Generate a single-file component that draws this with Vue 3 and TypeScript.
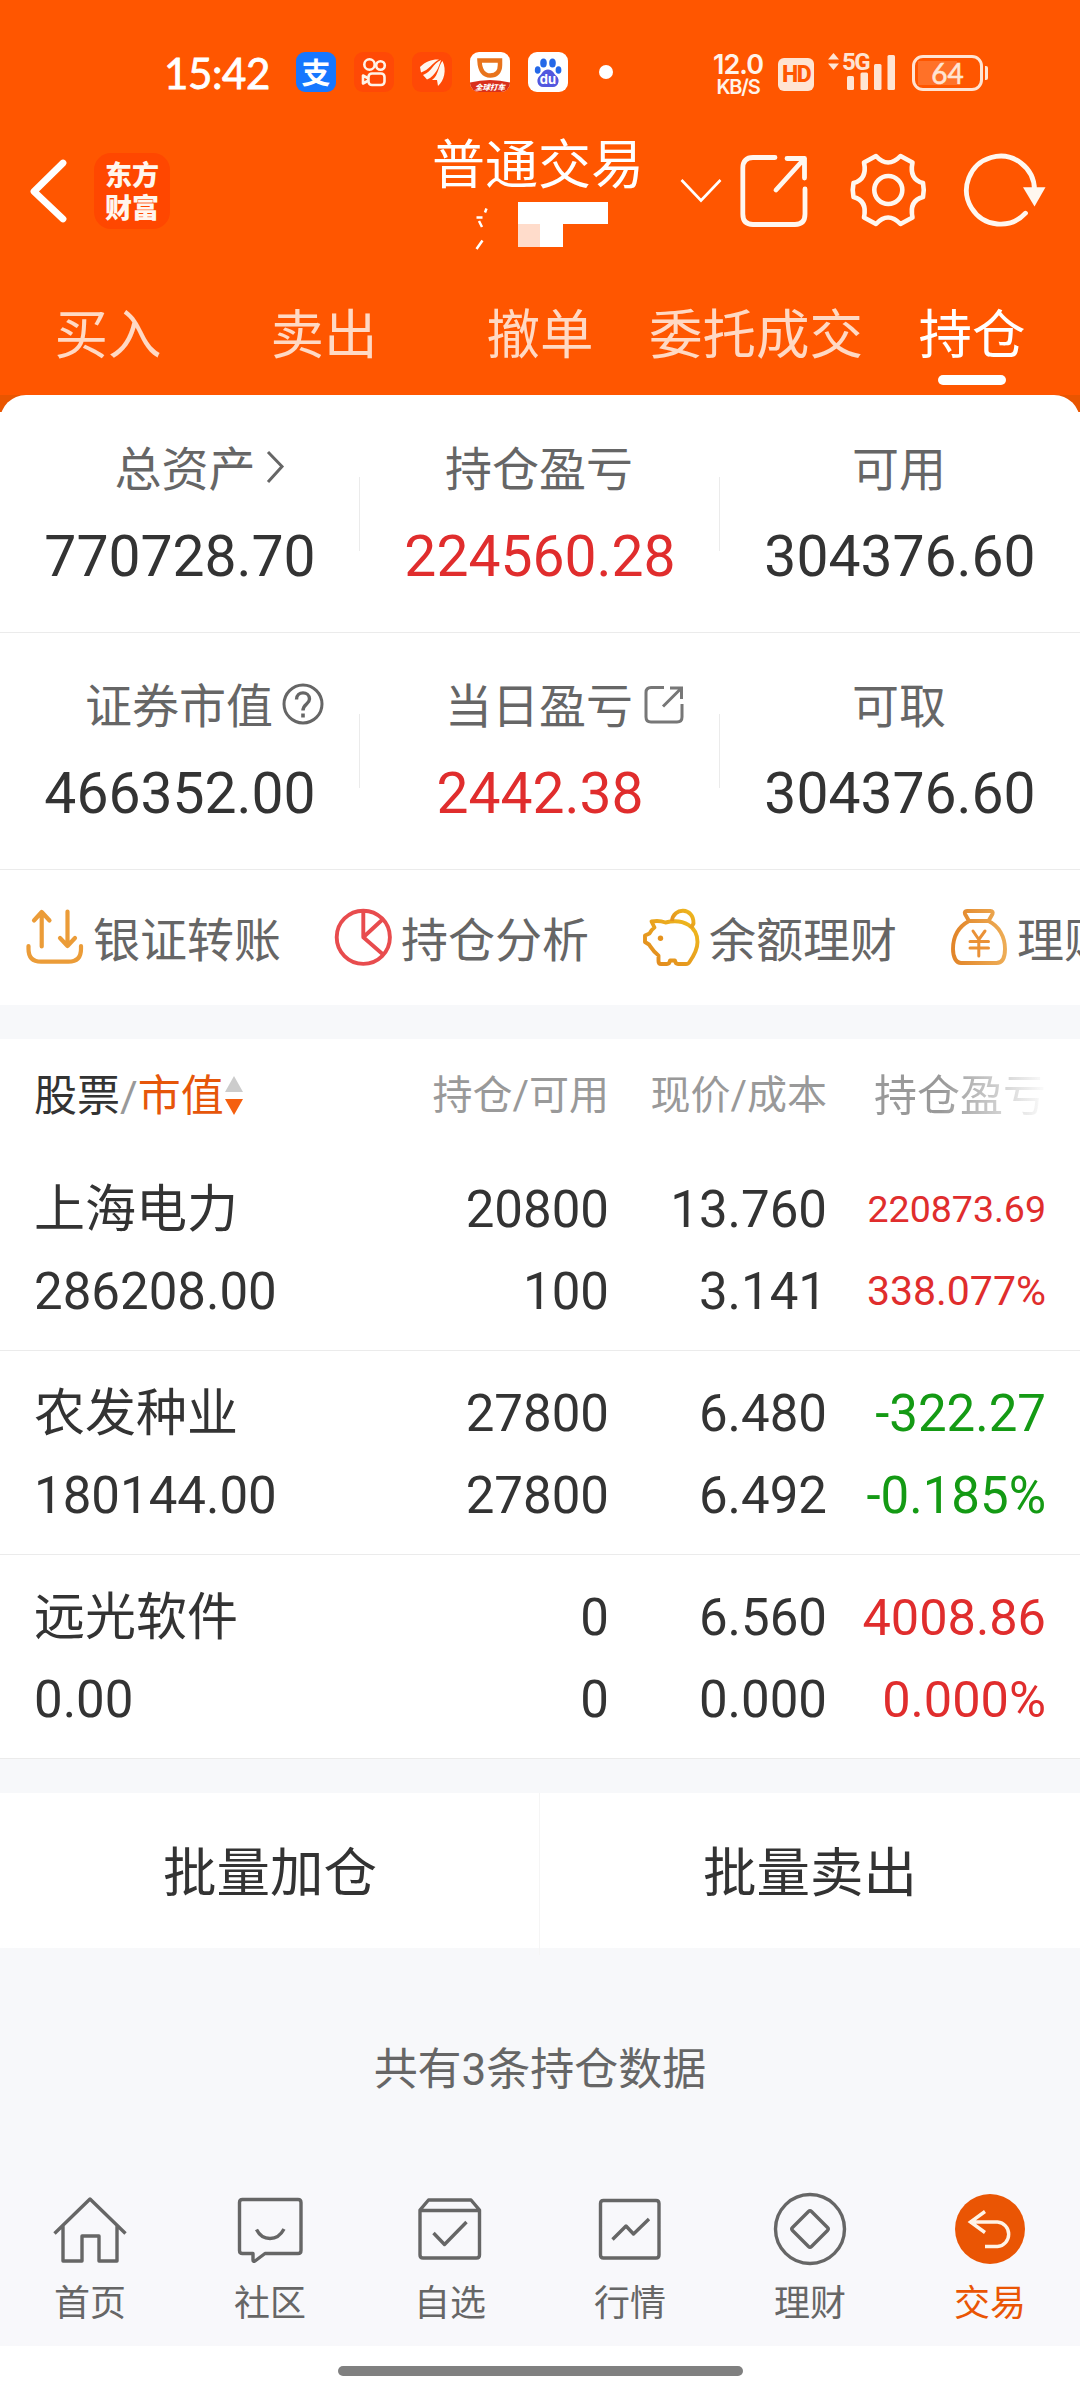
<script setup lang="ts">
interface Holding {
  name: string
  value: string
  qty: string
  avail: string
  price: string
  cost: string
  profit: string
  rate: string
  tone: 'up' | 'down'
  compact?: boolean
}

const tabs: string[] = ['买入', '卖出', '撤单', '委托成交', '持仓']
const activeTab = '持仓'

const summary = [
  [
    { label: '总资产', value: '770728.70', icon: 'more', red: false },
    { label: '持仓盈亏', value: '224560.28', icon: '', red: true },
    { label: '可用', value: '304376.60', icon: '', red: false },
  ],
  [
    { label: '证券市值', value: '466352.00', icon: 'help', red: false },
    { label: '当日盈亏', value: '2442.38', icon: 'open', red: true },
    { label: '可取', value: '304376.60', icon: '', red: false },
  ],
]

const shortcuts = [
  { icon: 'transfer', label: '银证转账' },
  { icon: 'pie', label: '持仓分析' },
  { icon: 'pig', label: '余额理财' },
  { icon: 'bag', label: '理财' },
]

const holdings: Holding[] = [
  { name: '上海电力', value: '286208.00', qty: '20800', avail: '100', price: '13.760', cost: '3.141', profit: '220873.69', rate: '338.077%', tone: 'up', compact: true },
  { name: '农发种业', value: '180144.00', qty: '27800', avail: '27800', price: '6.480', cost: '6.492', profit: '-322.27', rate: '-0.185%', tone: 'down' },
  { name: '远光软件', value: '0.00', qty: '0', avail: '0', price: '6.560', cost: '0.000', profit: '4008.86', rate: '0.000%', tone: 'up' },
]

const nav = [
  { icon: 'home', label: '首页' },
  { icon: 'chat', label: '社区' },
  { icon: 'box', label: '自选' },
  { icon: 'chart', label: '行情' },
  { icon: 'finance', label: '理财' },
  { icon: 'trade', label: '交易' },
]
</script>

<template>
  <div class="screen">
    <header class="top">
      <div class="status">
        <span class="clock">15:42</span>
        <div class="apps">
          <span class="app alipay">支</span>
          <svg class="app kuai" viewBox="0 0 40 40" fill="none" stroke="#fff3e8" stroke-width="2.6">
            <circle cx="15.500" cy="12.500" r="5.200" /><circle cx="26.500" cy="13.500" r="4.300" />
            <rect x="14.500" y="21.500" width="16" height="11.500" rx="3.500" />
            <path d="M14.500 26.500 9 23.500v8l5.500-3" stroke-linejoin="round" />
          </svg>
          <svg class="app east" viewBox="0 0 40 40" fill="#fff6ee">
            <path d="M8 15C14 9 21 7 27 7.500 20 11 17 18 9 20.500Z" />
            <path d="M11 23C20 20 21 11 29 8 27 14 24 24 15 27.500Z" />
            <path d="M20 28C27 23 26 14 30.500 9 35 18 32 29 26 34L25 28Z" />
          </svg>
          <div class="app didi">
            <svg viewBox="0 0 40 40">
              <path d="M9.500 8.500h20.500v4.500c0 7-4 10.500-9.700 10.500S10 20 9.500 8.500Z" fill="none" stroke="#e8731c" stroke-width="4.500" />
              <path d="M0 30.500q20-5 40 0V40H0Z" fill="#d9301c" />
            </svg>
            <span>全球打车</span>
          </div>
          <div class="app baidu">
            <svg viewBox="0 0 40 40">
              <g fill="#2468e8"><ellipse cx="15.500" cy="11" rx="3.300" ry="4.600" /><ellipse cx="24.500" cy="11" rx="3.300" ry="4.600" /><ellipse cx="9.700" cy="18" rx="2.900" ry="3.800" /><ellipse cx="30.500" cy="18" rx="2.900" ry="3.800" /></g>
              <path d="M20 17.500c5 0 5.500 4 8.500 6.500 4 3.500 2 11-3.500 11H15c-5.500 0-7.500-7.500-3.500-11C14.500 21.500 15 17.500 20 17.500Z" fill="#5257df" />
            </svg>
            <span>du</span>
          </div>
        </div>
        <i class="dot"></i>
        <div class="speed"><b>12.0</b><em>KB/S</em></div>
        <span class="hd">HD</span>
        <div class="signal">
          <svg viewBox="0 0 70 40" fill="#ffe4d3">
            <path d="M1 8.500 6.500 2 12 8.500ZM1 12.500 6.500 19 12 12.500Z" />
            <rect x="20" y="25" width="7" height="14" rx="1.500" /><rect x="33.500" y="21.500" width="7.500" height="17.500" rx="1.500" />
            <rect x="47" y="13" width="7.500" height="26" rx="1.500" /><rect x="60.500" y="4" width="7.500" height="35" rx="1.500" />
          </svg>
          <span>5G</span>
        </div>
        <div class="battery"><span>64</span></div>
      </div>

      <div class="titlebar">
        <svg class="back" viewBox="0 0 44 70" fill="none" stroke="#fff" stroke-width="6.800" stroke-linecap="round" stroke-linejoin="round"><path d="M38 7 9 35.500 38 63" /></svg>
        <div class="logo"><span>东方</span><span>财富</span></div>
        <div class="title">
          <h1>普通交易</h1>
          <svg viewBox="0 0 208 50">
            <path d="M53.500 8.500l-1.500 4M43.500 17.500h6M46 21l3 6M49.500 40.500l-6 8.500" fill="none" stroke="#fff" stroke-width="2.500" />
            <path d="M85 2h90v22h-45v23h-23V24H85Z" fill="#fff" /><path d="M85 24h22v23H85Z" fill="#ffdccb" />
          </svg>
        </div>
        <svg class="chev" viewBox="0 0 42 26" fill="none" stroke="#fff" stroke-width="2.600"><path d="M1.500 2 21 22.500 40.500 2" /></svg>
        <svg class="share" viewBox="0 0 80 80" fill="none" stroke="#fff7ef" stroke-width="4.800" stroke-linecap="round" stroke-linejoin="round">
          <path d="M41 7.500H19Q8.800 7.500 8.800 18V64Q8.800 74.500 19 74.500H61Q71 74.500 71 64V39" /><path d="M53 8.500H70.500V28M70.500 8.500 42 40" />
        </svg>
        <svg class="gear" viewBox="0 0 80 80" fill="none" stroke="#fff7ef" stroke-width="4.600" stroke-linejoin="round">
          <path d="M28 6Q40 19 52.500 6L64.500 12.500Q61 29.500 75 33Q76.500 40 75 47Q61 50.500 64.500 67.500L52.500 74Q40 61 28 74L16 67.500Q19.500 50.500 5.500 47Q4 40 5.500 33Q19.500 29.500 16 12.500Z" /><circle cx="40.300" cy="40" r="14" />
        </svg>
        <svg class="refresh" viewBox="0 0 88 80" fill="none" stroke="#fff7ef" stroke-width="4.800">
          <path d="M74.500 40A34 34 0 1 0 65.500 63.200" stroke-linecap="round" /><path d="M63 37.300H85.500L74.500 56.500Z" fill="#fff7ef" stroke="none" />
        </svg>
      </div>

      <nav class="tabs">
        <div v-for="t in tabs" :key="t" class="tab" :class="{ on: t === activeTab }">{{ t }}<i v-if="t === activeTab"></i></div>
      </nav>
    </header>

    <div class="cardwrap">
      <section class="card">
        <div v-for="(row, r) in summary" :key="r" class="sumrow">
          <div v-for="c in row" :key="c.label" class="cell">
            <div class="label" :class="{ shifted: c.icon === 'more' }">
              {{ c.label }}
              <svg v-if="c.icon === 'more'" class="li" viewBox="0 0 42 42" fill="none" stroke="#666" stroke-width="3"><path d="M3 6 17 20.500 3 36" /></svg>
              <svg v-if="c.icon === 'help'" class="li" viewBox="0 0 42 42" fill="none" stroke="#666" stroke-width="3"><circle cx="21" cy="21" r="19" /><path d="M14.500 16.500C14.500 7.500 27.500 8 27.500 16 27.500 21 21 21 21 27.500" stroke-width="3.400" /><path d="M21 30.500v4" stroke-width="3.600" /></svg>
              <svg v-if="c.icon === 'open'" class="li" viewBox="0 0 42 42" fill="none" stroke="#777" stroke-width="3"><path d="M22 4.500H9Q4 4.500 4 9.500V34Q4 39 9 39H35Q40 39 40 34V21" /><path d="M28 5H39.500V16M39.500 5 21 23.500" /></svg>
            </div>
            <div class="value" :class="{ red: c.red }">{{ c.value }}</div>
          </div>
        </div>
        <div class="shortcuts">
          <div v-for="s in shortcuts" :key="s.label" class="short">
            <svg v-if="s.icon === 'transfer'" viewBox="0 0 60 60" fill="none" stroke="#eb9c38" stroke-width="4.200" stroke-linecap="round" stroke-linejoin="round">
              <path d="M3.500 39V42Q3.500 54.700 16 54.700H43.500Q56 54.700 56 42V39" /><path d="M16.700 39.500V5M9 13.500 16.700 5 24.500 13.500M42.500 4.500V39M35 31 42.500 39 50 31" />
            </svg>
            <svg v-else-if="s.icon === 'pie'" viewBox="0 0 60 60" fill="none" stroke="#e84c4e" stroke-width="3.900">
              <circle cx="30.300" cy="30.300" r="26.600" /><path d="M30.300 3.500V30.300L49.500 12.500M30.300 30.300 49.500 47" stroke-linejoin="round" />
            </svg>
            <svg v-else-if="s.icon === 'pig'" viewBox="0 0 60 60" fill="none" stroke="url(#gold)" stroke-width="3.900" stroke-linejoin="round">
              <defs><linearGradient id="gold" x1="0" y1="1" x2="1" y2="0"><stop offset="0" stop-color="#e1861f" /><stop offset="1" stop-color="#efbb1d" /></linearGradient></defs>
              <path d="M10.500 14.500Q18 13 24.500 15.500C43 11 56.500 20 56.500 35C56.500 43 52 50 48.500 55Q47.500 57 45 57H37Q34.500 57 34 53.500H29Q28.500 57 26 57H20Q17.500 57 17.500 54V48.500C12.500 45 10.500 41 8 37.500L4 35V28.500L8.500 26.500Q10 23 13.500 20.500Z" />
              <path d="M31 14C32 0 53 0 52.500 16.500L50 21" /><circle cx="19.500" cy="31.300" r="2.700" fill="#e5921d" stroke="none" />
            </svg>
            <svg v-else viewBox="0 0 60 60" fill="none" stroke="url(#amber)" stroke-width="3.900" stroke-linejoin="round" stroke-linecap="round">
              <defs><linearGradient id="amber" x1="0" y1="0" x2="1" y2="0"><stop offset="0" stop-color="#e28529" /><stop offset="1" stop-color="#edac55" /></linearGradient></defs>
              <path d="M20 14 16 7Q15 4 18 4H41.500Q44.500 4 43.500 7L39.500 14ZM20 14C9 20 4 30 4 42C4 51 7.500 56 12 56H47.500C53 56 56 51 56 42C56 30 50 19 39.500 14" />
              <path d="M24 24 29.800 32.500 36 24M21 34.500H39.500M21 41H39.500M29.800 33V49" stroke="#ea9137" stroke-width="3" />
            </svg>
            <span>{{ s.label }}</span>
          </div>
        </div>
      </section>
    </div>

    <div class="gap"></div>

    <section class="table">
      <div class="thead">
        <div class="th first"><span class="dark">股票</span><span>/</span><span class="sorted">市值</span>
          <svg viewBox="0 0 18 40"><path d="M0 17 9 1l9 16Z" fill="#ccc" /><path d="M0 24H18L9 40Z" fill="#f5600f" /></svg>
        </div>
        <div class="th">持仓/可用</div>
        <div class="th">现价/成本</div>
        <div class="th fade">持仓盈亏</div>
      </div>
      <div v-for="h in holdings" :key="h.name" class="trow">
        <div class="td first"><span>{{ h.name }}</span><span>{{ h.value }}</span></div>
        <div class="td"><span>{{ h.qty }}</span><span>{{ h.avail }}</span></div>
        <div class="td"><span>{{ h.price }}</span><span>{{ h.cost }}</span></div>
        <div class="td" :class="[h.tone, { compact: h.compact }]"><span>{{ h.profit }}</span><span>{{ h.rate }}</span></div>
      </div>
    </section>

    <div class="gap"></div>

    <section class="batch"><div>批量加仓</div><div>批量卖出</div></section>

    <p class="note">共有3条持仓数据</p>

    <footer class="nav">
      <div v-for="n in nav" :key="n.label" class="item" :class="{ active: n.icon === 'trade' }">
        <svg viewBox="0 0 80 80" fill="none" stroke="#666" stroke-width="3.400" stroke-linejoin="round">
          <path v-if="n.icon === 'home'" d="M4.500 43.500 40 9 75.500 43.500M13 36V71H32V46H49V71H67V36" />
          <path v-else-if="n.icon === 'chat'" d="M12.500 9.500H68Q71 9.500 71 12.500V60.500Q71 63.500 68 63.500H35L25 71Q23 72 23 70V63.500H12.500Q9.500 63.500 9.500 60.500V12.500Q9.500 9.500 12.500 9.500ZM26.500 39.500Q31 48.500 40 48.500T54 39" />
          <path v-else-if="n.icon === 'box'" d="M10 20 18.500 10H61L69.500 20V65Q69.500 68 66.500 68H13Q10 68 10 65ZM10 20.500H69.500M23.500 43 34.500 54.500 56.500 32" />
          <path v-else-if="n.icon === 'chart'" d="M13.500 10.500H66Q69 10.500 69 13.500V65Q69 68 66 68H13.500Q10.500 68 10.500 65V13.500Q10.500 10.500 13.500 10.500ZM22.500 49.500 36 36 43.500 44 59 29" />
          <template v-else-if="n.icon === 'finance'"><circle cx="40" cy="39" r="34.500" /><path d="M38.500 21.500Q40 20 41.500 21.500L57.500 37.500Q59 39 57.500 40.500L41.500 56.500Q40 58 38.500 56.500L22.500 40.500Q21 39 22.500 37.500Z" /></template>
          <template v-else><circle cx="40" cy="39" r="35" fill="#ea5504" stroke="none" /><path d="M35 21.500 20.500 32 35 42.500M20.500 32H47.500A12.300 12.300 0 0 1 47.500 56.500H35" stroke="#fff3e6" stroke-linejoin="miter" /></template>
        </svg>
        <span>{{ n.label }}</span>
      </div>
    </footer>
    <div class="gesture"><i></i></div>
  </div>
</template>

<style>
body { background: #fff; }
</style>

<style scoped>
.screen { width: 1080px; height: 2399px; overflow: hidden; background: #f7f8fa; color: #333; font-family: Roboto, "Noto Sans CJK SC", sans-serif; display: flex; flex-direction: column; }
.screen svg { display: block; flex: none; }
.top { height: 395px; flex: none; background: #ff5600; color: #fff; }

.status { height: 132px; display: flex; align-items: flex-start; padding-left: 164px; box-sizing: border-box; }
.clock { width: 132px; margin-top: 48px; font: 400 42px/50px Lato, sans-serif; letter-spacing: -.4px; -webkit-text-stroke: .8px #fff; }
.apps { display: flex; gap: 18px; margin-top: 52px; }
.app { position: relative; display: block; width: 40px; height: 40px; border-radius: 9px; overflow: hidden; }
.app svg { width: 40px; height: 40px; }
.alipay { overflow: visible; background: #1677ff; font: 700 29px/39px "Noto Sans CJK SC", sans-serif; text-align: center; }
.kuai, .east { background: #ff4906; }
.didi, .baidu { background: #fff; }
.didi span { position: absolute; left: 0; width: 40px; top: 29px; text-align: center; font: italic 900 7.500px/11px "Noto Sans CJK SC", sans-serif; }
.baidu span { position: absolute; left: 0; width: 40px; top: 20px; text-align: center; font: 700 13px/14px Inter, sans-serif; }
.dot { width: 14px; height: 14px; border-radius: 50%; background: #fff; margin: 65px 0 0 31px; }
.speed { width: 60px; margin: 51px 0 0 95px; text-align: center; color: #fff3ea; display: flex; flex-direction: column; }
.speed b { font: 600 27px/27px Inter, sans-serif; letter-spacing: -1px; }
.speed em { font: 600 20px/19px Inter, sans-serif; letter-spacing: -1.200px; }
.hd { margin: 58px 0 0 10px; width: 36px; height: 33px; border-radius: 6px; background: #ffe4d3; color: #ff5600; font: 800 23px/33px Roboto, sans-serif; text-align: center; letter-spacing: -1.500px; }
.signal { position: relative; margin: 51px 0 0 13px; width: 70px; height: 40px; }
.signal svg { width: 70px; height: 40px; }
.signal span { position: absolute; left: 15px; top: 0; color: #ffe4d3; font: 700 24px/22px Roboto, sans-serif; letter-spacing: -1.500px; }
.battery { position: relative; margin: 55px 0 0 15px; width: 71px; height: 36px; border: 3px solid #ffe4d3; border-radius: 11px; box-sizing: border-box; text-align: center; font: 400 28px/31px Lato, sans-serif; -webkit-text-stroke: .6px #ffe4d3; color: #ffe4d3; background: linear-gradient(#ff7128, #ff7128) 3px 3px/39px 24px no-repeat; }
.battery::after { content: ""; position: absolute; right: -8px; top: 8px; width: 3px; height: 14px; background: #ffe4d3; border-radius: 0 2px 2px 0; }

.titlebar { height: 136px; display: flex; align-items: flex-start; }
.back { width: 44px; height: 70px; margin: 24px 0 0 25px; }
.logo { margin: 21px 0 0 25px; width: 76px; height: 76px; box-sizing: border-box; border-radius: 17px; background: #ff4700; padding-top: 4px; display: flex; flex-direction: column; align-items: center; font: 900 27px/33px "Noto Sans CJK SC", sans-serif; color: #fff6ee; }
.title { margin-left: 262px; width: 215px; }
h1 { margin: 0; font-size: 53px; line-height: 68px; font-weight: 400; white-space: nowrap; }
.title svg { width: 208px; height: 50px; margin-left: 1px; }
.chev { width: 42px; height: 26px; margin: 46px 0 0 33px; }
.share { width: 80px; height: 80px; margin: 18px 0 0 12px; }
.gear { width: 80px; height: 80px; margin: 18px 0 0 34px; }
.refresh { width: 88px; height: 80px; margin: 18px 0 0 32px; }

.tabs { display: grid; grid-template-columns: repeat(5, 1fr); }
.tab { display: flex; flex-direction: column; align-items: center; padding-top: 33px; font-size: 53.500px; line-height: 70px; color: #ffd9c4; white-space: nowrap; }
.tab.on { color: #fff; }
.tab i { width: 68px; height: 10px; border-radius: 5px; background: #fff; margin-top: 4px; }

.cardwrap { flex: none; background: linear-gradient(#e95500 17px, #fff 17px); }
.card { background: #fff; border-radius: 26px 26px 0 0; overflow: hidden; height: 610px; }
.sumrow { display: grid; grid-template-columns: repeat(3, 1fr); height: 237px; box-sizing: border-box; border-bottom: 1px solid #ebebeb; }
.sumrow:first-child { height: 238px; padding-top: 1px; }
.cell { padding-top: 44px; text-align: center; background: linear-gradient(#ebebeb, #ebebeb) 100% 81px/1px 74px no-repeat; }
.cell:last-child { background: none; }
.label { position: relative; left: -1px; width: max-content; margin: 0 auto; font-size: 47px; line-height: 60px; color: #666; }
.label.shifted { left: 5px; }
.li { position: absolute; left: calc(100% + 9px); top: 6px; width: 42px; height: 42px; }
.value { margin-top: 21px; font-size: 57px; line-height: 72px; }
.red { color: #e02d2d; }
.shortcuts { display: flex; gap: 46px; padding: 37px 0 0 25px; }
.short { flex: none; width: 262px; display: flex; font-size: 47px; line-height: 68px; color: #666; white-space: nowrap; }
.short svg { width: 60px; height: 60px; margin-right: 8px; }

.gap { flex: none; height: 34px; }

.table { flex: none; background: #fff; }
.thead, .trow { display: grid; grid-template-columns: 341px 234px 218px 219px; padding: 0 34px; }
.thead { height: 108px; box-sizing: border-box; padding-top: 27px; color: #999; font-size: 40px; line-height: 60px; text-align: right; }
.th, .td { white-space: nowrap; }
.th.first { display: flex; font-size: 43px; }
.th.first svg { width: 18px; height: 40px; margin: 9px 0 0 1px; }
.dark { color: #333; }
.sorted { color: #e6560a; }
.fade { font-size: 43px; background: linear-gradient(90deg, #999 0 52%, #9990 101%); -webkit-background-clip: text; background-clip: text; color: transparent; }
.trow { height: 204px; box-sizing: border-box; border-bottom: 1px solid #ebebeb; padding-top: 22px; }
.td { display: flex; flex-direction: column; text-align: right; font-size: 51px; line-height: 82px; }
.td.first { text-align: left; }
.up { color: #e02d2d; font-size: 50.500px; }
.down { color: #149a14; }
.compact span:first-child { font-size: 37.500px; line-height: 80px; }
.compact span:last-child { font-size: 41px; line-height: 84px; }

.batch { flex: none; height: 155px; display: grid; grid-template-columns: 1fr 1fr; background: #fff; font-size: 53.500px; line-height: 162px; text-align: center; }
.batch div:first-child { box-shadow: inset -1px 0 #f5f5f5; }
.note { margin: 0; height: 232px; flex: none; padding-top: 87px; box-sizing: border-box; font-size: 44px; line-height: 70px; color: #666; text-align: center; }
.nav { flex: none; height: 166px; background: #f8f8fb; display: grid; grid-template-columns: repeat(6, 1fr); font-size: 36px; line-height: 50px; color: #666; }
.item { display: flex; flex-direction: column; align-items: center; padding-top: 10px; }
.item svg { width: 80px; height: 80px; margin-bottom: 9px; }
.item.active { color: #ea5504; }
.gesture { flex: 1; background: #fff; padding-top: 20px; }
.gesture i { display: block; width: 405px; height: 10px; border-radius: 5px; background: #808080; margin: 0 auto; }
</style>
